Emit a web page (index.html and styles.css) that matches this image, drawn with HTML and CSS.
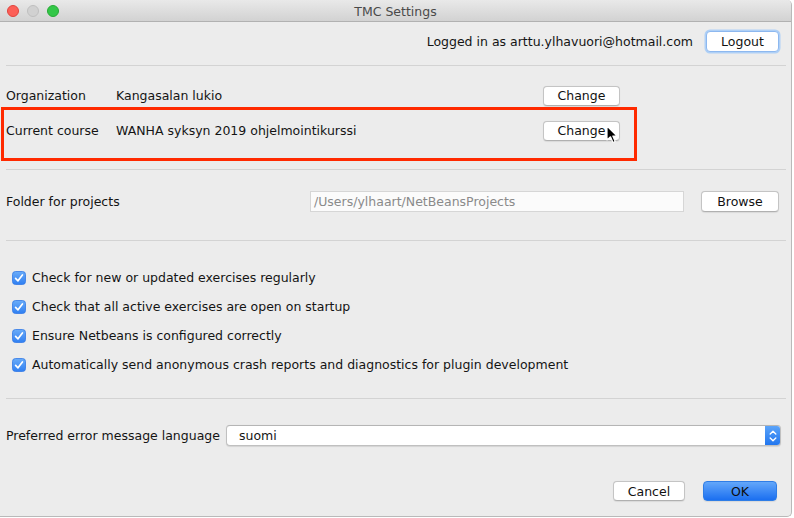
FILE: index.html
```html
<!DOCTYPE html>
<html>
<head>
<meta charset="utf-8">
<link rel="stylesheet" href="styles.css">
</head>
<body>
<div class="window">
  <div class="titlebar">
    <div class="lights">
      <span class="light red"></span>
      <span class="light gray"></span>
      <span class="light green"></span>
    </div>
    <div class="title">TMC Settings</div>
  </div>

  <div class="login">
    <span class="login-text">Logged in as arttu.ylhavuori@hotmail.com</span>
    <button class="btn focus logout">Logout</button>
  </div>
  <div class="sep"></div>

  <div class="course-section">
    <div class="grid-row">
      <span class="label">Organization</span>
      <span class="value">Kangasalan lukio</span>
      <button class="btn change">Change</button>
    </div>
    <div class="grid-row">
      <span class="label">Current course</span>
      <span class="value">WANHA syksyn 2019 ohjelmointikurssi</span>
      <button class="btn change">Change</button>
    </div>
    <div class="highlight"></div>
    <svg class="cursor" width="13" height="20" viewBox="0 0 13 20">
      <path d="M1,1 L1,15 L4.5,11.8 L7,17.5 L9.2,16.5 L6.8,11 L11,11 Z" fill="#000" stroke="#fff" stroke-width="1.2" stroke-linejoin="round"/>
    </svg>
  </div>
  <div class="sep"></div>

  <div class="folder-section">
    <span class="label grow">Folder for projects</span>
    <div class="path-input">/Users/ylhaart/NetBeansProjects</div>
    <button class="btn browse">Browse</button>
  </div>
  <div class="sep"></div>

  <div class="checks">
    <label class="check"><svg class="cb" width="14" height="14" viewBox="0 0 14 14"><defs><linearGradient id="g1" x1="0" y1="0" x2="0" y2="1"><stop offset="0" stop-color="#6aacf8"/><stop offset="1" stop-color="#2f7ff2"/></linearGradient></defs><rect x="0.5" y="0.5" width="13" height="13" rx="3" fill="url(#g1)" stroke="#3279e6" stroke-width="0.8"/><path d="M3.6,7.3 L6,9.8 L10.4,3.9" fill="none" stroke="#fff" stroke-width="1.7" stroke-linecap="round" stroke-linejoin="round"/></svg><span>Check for new or updated exercises regularly</span></label>
    <label class="check"><svg class="cb" width="14" height="14" viewBox="0 0 14 14"><rect x="0.5" y="0.5" width="13" height="13" rx="3" fill="url(#g1)" stroke="#3279e6" stroke-width="0.8"/><path d="M3.6,7.3 L6,9.8 L10.4,3.9" fill="none" stroke="#fff" stroke-width="1.7" stroke-linecap="round" stroke-linejoin="round"/></svg><span>Check that all active exercises are open on startup</span></label>
    <label class="check"><svg class="cb" width="14" height="14" viewBox="0 0 14 14"><rect x="0.5" y="0.5" width="13" height="13" rx="3" fill="url(#g1)" stroke="#3279e6" stroke-width="0.8"/><path d="M3.6,7.3 L6,9.8 L10.4,3.9" fill="none" stroke="#fff" stroke-width="1.7" stroke-linecap="round" stroke-linejoin="round"/></svg><span>Ensure Netbeans is configured correctly</span></label>
    <label class="check"><svg class="cb" width="14" height="14" viewBox="0 0 14 14"><rect x="0.5" y="0.5" width="13" height="13" rx="3" fill="url(#g1)" stroke="#3279e6" stroke-width="0.8"/><path d="M3.6,7.3 L6,9.8 L10.4,3.9" fill="none" stroke="#fff" stroke-width="1.7" stroke-linecap="round" stroke-linejoin="round"/></svg><span>Automatically send anonymous crash reports and diagnostics for plugin development</span></label>
  </div>
  <div class="sep"></div>

  <div class="lang-section">
    <div class="lang-row">
      <span class="label lang-label">Preferred error message language</span>
      <div class="select">
        <span class="select-text">suomi</span>
        <span class="stepper">
          <svg width="10" height="14" viewBox="0 0 10 14"><path d="M2.2,5 L5,2.3 L7.8,5" fill="none" stroke="#fff" stroke-width="1.4" stroke-linecap="round" stroke-linejoin="round"/><path d="M2.2,9 L5,11.7 L7.8,9" fill="none" stroke="#fff" stroke-width="1.4" stroke-linecap="round" stroke-linejoin="round"/></svg>
        </span>
      </div>
    </div>
    <div class="actions">
      <button class="btn cancel">Cancel</button>
      <button class="btn primary ok">OK</button>
    </div>
  </div>
</div>
</body>
</html>
```

FILE: styles.css
```css
* { box-sizing: border-box; }
html, body { margin: 0; padding: 0; background: #ffffff; }
body {
  font-family: "DejaVu Sans", "Liberation Sans", sans-serif;
  font-size: 12.5px;
  color: #141414;
  width: 794px;
  height: 518px;
  overflow: hidden;
}
.window {
  position: relative;
  width: 792px;
  height: 517px;
  background: #ececec;
  border-right: 1px solid #b9b9b9;
  border-bottom: 1px solid #b9b9b9;
  border-radius: 0 5px 5px 0;
  overflow: hidden;
}
.titlebar {
  position: relative;
  height: 22px;
  background: linear-gradient(#e9e9e9, #d2d2d2);
  border-bottom: 1px solid #b1b1b1;
  display: flex;
  align-items: center;
  justify-content: center;
}
.lights {
  position: absolute;
  left: 7px;
  top: 5px;
  display: flex;
  gap: 8px;
}
.light {
  width: 12px;
  height: 12px;
  border-radius: 50%;
  display: block;
}
.light.red { background: #fc5f57; border: 0.5px solid #e0443e; }
.light.gray { background: #d1d1d1; border: 0.5px solid #bfbfbf; }
.light.green { background: #33c748; border: 0.5px solid #27aa35; }
.title {
  font-size: 12.5px;
  color: #4a4a4a;
  padding-top: 1px;
}

.btn {
  font-family: inherit;
  font-size: 12.5px;
  color: #111;
  background: #ffffff;
  border: 1px solid #c4c4c4;
  border-bottom-color: #b0b0b0;
  border-radius: 4px;
  height: 21px;
  padding: 0;
  box-shadow: 0 0.5px 1px rgba(0,0,0,0.08);
  display: inline-flex;
  align-items: center;
  justify-content: center;
}
.btn.focus {
  border: 1px solid #8db8ef;
  box-shadow: 0 0 0 1.5px #afd0f6;
}

.login {
  height: 43px;
  display: flex;
  align-items: center;
  justify-content: flex-end;
  padding-right: 12px;
  padding-bottom: 5px;
}
.login-text { margin-right: 13px; }
.logout { width: 73px; height: 21px; }

.sep {
  height: 1px;
  background: #d3d3d3;
  margin: 0 5px 0 6px;
}

.course-section {
  position: relative;
  height: 103px;
  padding: 19px 0 0 6px;
  display: flex;
  flex-direction: column;
  gap: 14px;
}
.grid-row {
  display: grid;
  grid-template-columns: 110px 427px 77px;
  align-items: center;
  height: 21px;
}
.change { width: 77px; height: 20px; }
.highlight {
  position: absolute;
  left: 1px;
  top: 41px;
  width: 636px;
  height: 54px;
  border: 3.5px solid #ff2a00;
  pointer-events: none;
}
.cursor {
  position: absolute;
  left: 606px;
  top: 59px;
}

.folder-section {
  height: 70px;
  display: flex;
  align-items: center;
  padding: 0 12px 7px 6px;
}
.grow { flex: 1; }
.path-input {
  width: 374px;
  height: 21px;
  background: #fbfbfb;
  border: 1px solid #d6d6d6;
  color: #8a8a8a;
  padding: 0 0 0 3px;
  display: flex;
  align-items: center;
  margin-right: 17px;
}
.browse { width: 78px; height: 21px; }

.checks {
  height: 157px;
  padding: 22px 0 0 12px;
  display: flex;
  flex-direction: column;
}
.check {
  height: 29px;
  display: flex;
  align-items: center;
  gap: 6px;
}
.cb { flex: none; }

.lang-section {
  padding: 26px 10px 0 6px;
}
.lang-row {
  display: flex;
  align-items: center;
  height: 21px;
}
.lang-label { width: 220px; }
.select {
  flex: 1;
  height: 21px;
  background: #fff;
  border: 1px solid #c0c0c0;
  border-top-color: #b5b5b5;
  border-radius: 4px;
  display: flex;
  align-items: center;
  justify-content: space-between;
  overflow: hidden;
  box-shadow: 0 0.5px 1px rgba(0,0,0,0.1);
}
.select-text { padding-left: 12px; }
.stepper {
  width: 16px;
  height: 21px;
  margin: -1px -1px -1px 0;
  background: linear-gradient(#5ea6fa, #1f74ee);
  border-radius: 0 4px 4px 0;
  display: flex;
  align-items: center;
  justify-content: center;
}
.actions {
  display: flex;
  justify-content: flex-end;
  gap: 18px;
  margin-top: 35px;
  padding-right: 4px;
}
.cancel { width: 72px; height: 20px; }
.ok { width: 74px; height: 20px; }
.btn.primary {
  background: linear-gradient(#63a7fa, #1b6ff0);
  border: 1px solid #2f7de6;
  color: #0d0d0d;
}
```
